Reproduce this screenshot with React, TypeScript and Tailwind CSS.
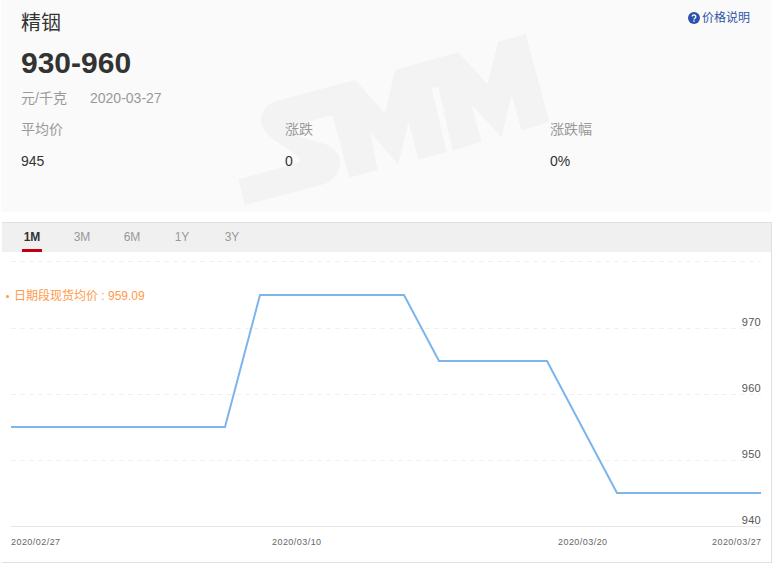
const FONT = "font-['Liberation_Sans','Noto_Sans_CJK_SC',sans-serif]";

const tabs = ["1M", "3M", "6M", "1Y", "3Y"];
const stats = [
  { label: "平均价", value: "945" },
  { label: "涨跌", value: "0" },
  { label: "涨跌幅", value: "0%" },
];
const grid = [261.5, 328.5, 394.5, 460.5];
const yLabels = [
  { t: "970", y: 326 },
  { t: "960", y: 392 },
  { t: "950", y: 458 },
  { t: "940", y: 524 },
];
const xLabels = [
  { t: "2020/02/27", x: 11 },
  { t: "2020/03/10", x: 272 },
  { t: "2020/03/20", x: 558 },
  { t: "2020/03/27", x: 712 },
];

const LOGO =
  "M25 478 L195 431 Q218 424 205 410 L130 358 Q85 325 95 285 Q105 250 150 240 L375 180 L465 280 L495 150 L685 97 L772 192 L805 65 L887 43 L958 305 L875 333 L845 225 L815 352 L725 255 L755 365 L668 392 L625 200 L605 205 L650 397 L565 418 L535 305 L505 435 L420 335 L443 450 L358 473 L307 285 L185 318 Q165 328 190 345 L285 372 Q335 395 330 435 Q322 478 280 493 L45 555 Z";

export default function App() {
  return (
    <div className={`${FONT} w-[777px] h-[569px] bg-white overflow-hidden`}>
      <section className="relative overflow-hidden ml-px w-[770px] h-[212px] bg-[#fafafa] pl-5 pr-5">
        <svg aria-hidden width="330" height="195" viewBox="0 0 990 585" className="absolute left-[229px] top-[20px]">
          <path d={LOGO} fill="#f3f3f3" />
        </svg>
        <div className="relative">
          <a className="absolute right-[1px] top-[10px] flex items-center gap-[2px] text-[12px] leading-4 text-[#2f55a8]">
            <svg width="12" height="12" viewBox="0 0 12 12">
              <circle cx="6" cy="6" r="6" fill="#2a52ad" />
              <path d="M4.2 4.6a1.8 1.8 0 1 1 2.7 1.6c-.6.35-.9.6-.9 1.2" fill="none" stroke="#fff" strokeWidth="1.3" />
              <rect x="5.3" y="8.3" width="1.4" height="1.4" fill="#fff" />
            </svg>
            价格说明
          </a>
          <h1 className="pt-[10px] text-[20px] leading-[26px] text-[#333] font-normal">精铟</h1>
          <div className="mt-[9px] text-[30px] leading-[36px] font-bold text-[#333]">930-960</div>
          <div className="mt-[7px] flex text-[14px] leading-5 text-[#999]">
            <span className="w-[69px]">元/千克</span>
            <span>2020-03-27</span>
          </div>
          <div className="mt-[11px] grid grid-cols-[264px_265px_1fr] text-[14px]">
            {stats.map((s) => (
              <div key={s.label}>
                <div className="leading-5 text-[#999]">{s.label}</div>
                <div className="mt-[12px] leading-5 text-[#333]">{s.value}</div>
              </div>
            ))}
          </div>
        </div>
      </section>

      <section className="mt-[10px] ml-[2px] w-[770px] h-[341px] border border-[#e0e0e0] border-l-0">
        <div className="flex h-[29px] bg-[#f0f0f0] pl-[20px] text-[12px]">
          {tabs.map((t, i) => (
            <div
              key={t}
              className={
                i === 0
                  ? "w-[20px] mr-[30px] h-[29px] border-b-[3px] border-[#c00012] text-center leading-[29px] font-bold text-[#333]"
                  : "w-[20px] mr-[30px] h-[29px] text-center leading-[29px] text-[#999]"
              }
            >
              {t}
            </div>
          ))}
        </div>
        <svg width="769" height="310" viewBox="2 252 769 310" className="block">
          {grid.map((y) => (
            <line key={y} x1="11" x2="761" y1={y} y2={y} stroke="#f0f0f0" strokeDasharray="5 4" />
          ))}
          <line x1="11" x2="761" y1="526.5" y2="526.5" stroke="#e8e8e8" />
          <polyline
            points="11,427 225,427 260,295 404,295 439,361 547,361 617,493 761,493"
            fill="none"
            stroke="#7cb5ec"
            strokeWidth="2"
          />
          <circle cx="7.5" cy="296.5" r="1.5" fill="#ff9a4a" />
          <text x="14" y="300" fontSize="12" fill="#ff9a4a">日期段现货均价 : 959.09</text>
          {yLabels.map((l) => (
            <text key={l.t} x="761" y={l.y} fontSize="11" textAnchor="end" fill="#555" letterSpacing="0.3">{l.t}</text>
          ))}
          {xLabels.map((l) => (
            <text key={l.t} x={l.x} y="545" fontSize="9" fill="#666" letterSpacing="0.45">{l.t}</text>
          ))}
        </svg>
      </section>
    </div>
  );
}
